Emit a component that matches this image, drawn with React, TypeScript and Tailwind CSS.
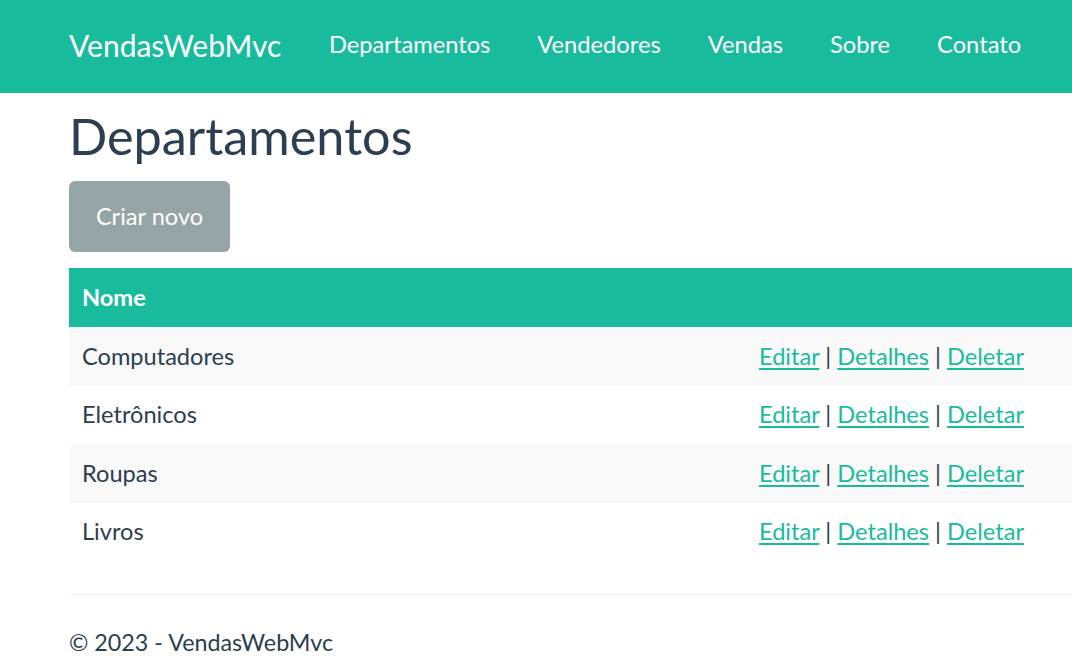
const departamentos = ['Computadores', 'Eletrônicos', 'Roupas', 'Livros'];

const navLinks = ['Departamentos', 'Vendedores', 'Vendas', 'Sobre', 'Contato'];

const Navbar = () => (
  <nav className="h-[93px] bg-[#18bc9c] flex items-center pl-[69px] pb-[3px]">
    <a href="#" className="text-[30px] text-white pr-[24px] leading-none">
      VendasWebMvc
    </a>
    <ul className="flex items-center">
      {navLinks.map(link => (
        <li key={link}>
          <a href="#" className="block px-[23.5px] text-[23.7px] text-white leading-none">
            {link}
          </a>
        </li>
      ))}
    </ul>
  </nav>
);

const RowActions = () => (
  <span>
    <a href="#" className="text-[#18bc9c] underline underline-offset-[3px]">Editar</a>
    {' | '}
    <a href="#" className="text-[#18bc9c] underline underline-offset-[3px]">Detalhes</a>
    {' | '}
    <a href="#" className="text-[#18bc9c] underline underline-offset-[3px]">Deletar</a>
  </span>
);

export default function App() {
  return (
    <div className="min-h-[668px] bg-white text-[#2c3e50] text-[23.6px] leading-[1.43] overflow-hidden" style={{ fontFamily: 'Lato, "Open Sans", sans-serif' }}>
      <Navbar />

      <main className="pl-[69px]">
        <h2 className="mt-[15px] text-[50.4px] leading-[1.1] font-normal">Departamentos</h2>

        <a href="#" className="mt-[18px] flex items-center justify-center w-[161px] h-[71px] rounded-[6px] bg-[#95a5a6] text-white">
          Criar novo
        </a>

        <table className="mt-[16px] w-full border-collapse">
          <thead>
            <tr className="h-[59px] bg-[#18bc9c] text-white">
              <th className="text-left font-bold px-[13px]">Nome</th>
              <th className="w-[326px]"></th>
            </tr>
          </thead>
          <tbody>
            {departamentos.map((nome, i) => (
              <tr key={nome} className={i % 2 === 0 ? 'h-[58.5px] bg-[#f9f9f9]' : 'h-[58.5px] bg-white'}>
                <td className="px-[13px]">{nome}</td>
                <td className="px-[13px] w-[326px]">
                  <RowActions />
                </td>
              </tr>
            ))}
          </tbody>
        </table>

        <hr className="mt-[33px] border-0 border-t border-[#eeeeee]" />
        <footer className="pt-[31px]">
          <p className="text-[23.3px]">© 2023 - VendasWebMvc</p>
        </footer>
      </main>
    </div>
  );
}
